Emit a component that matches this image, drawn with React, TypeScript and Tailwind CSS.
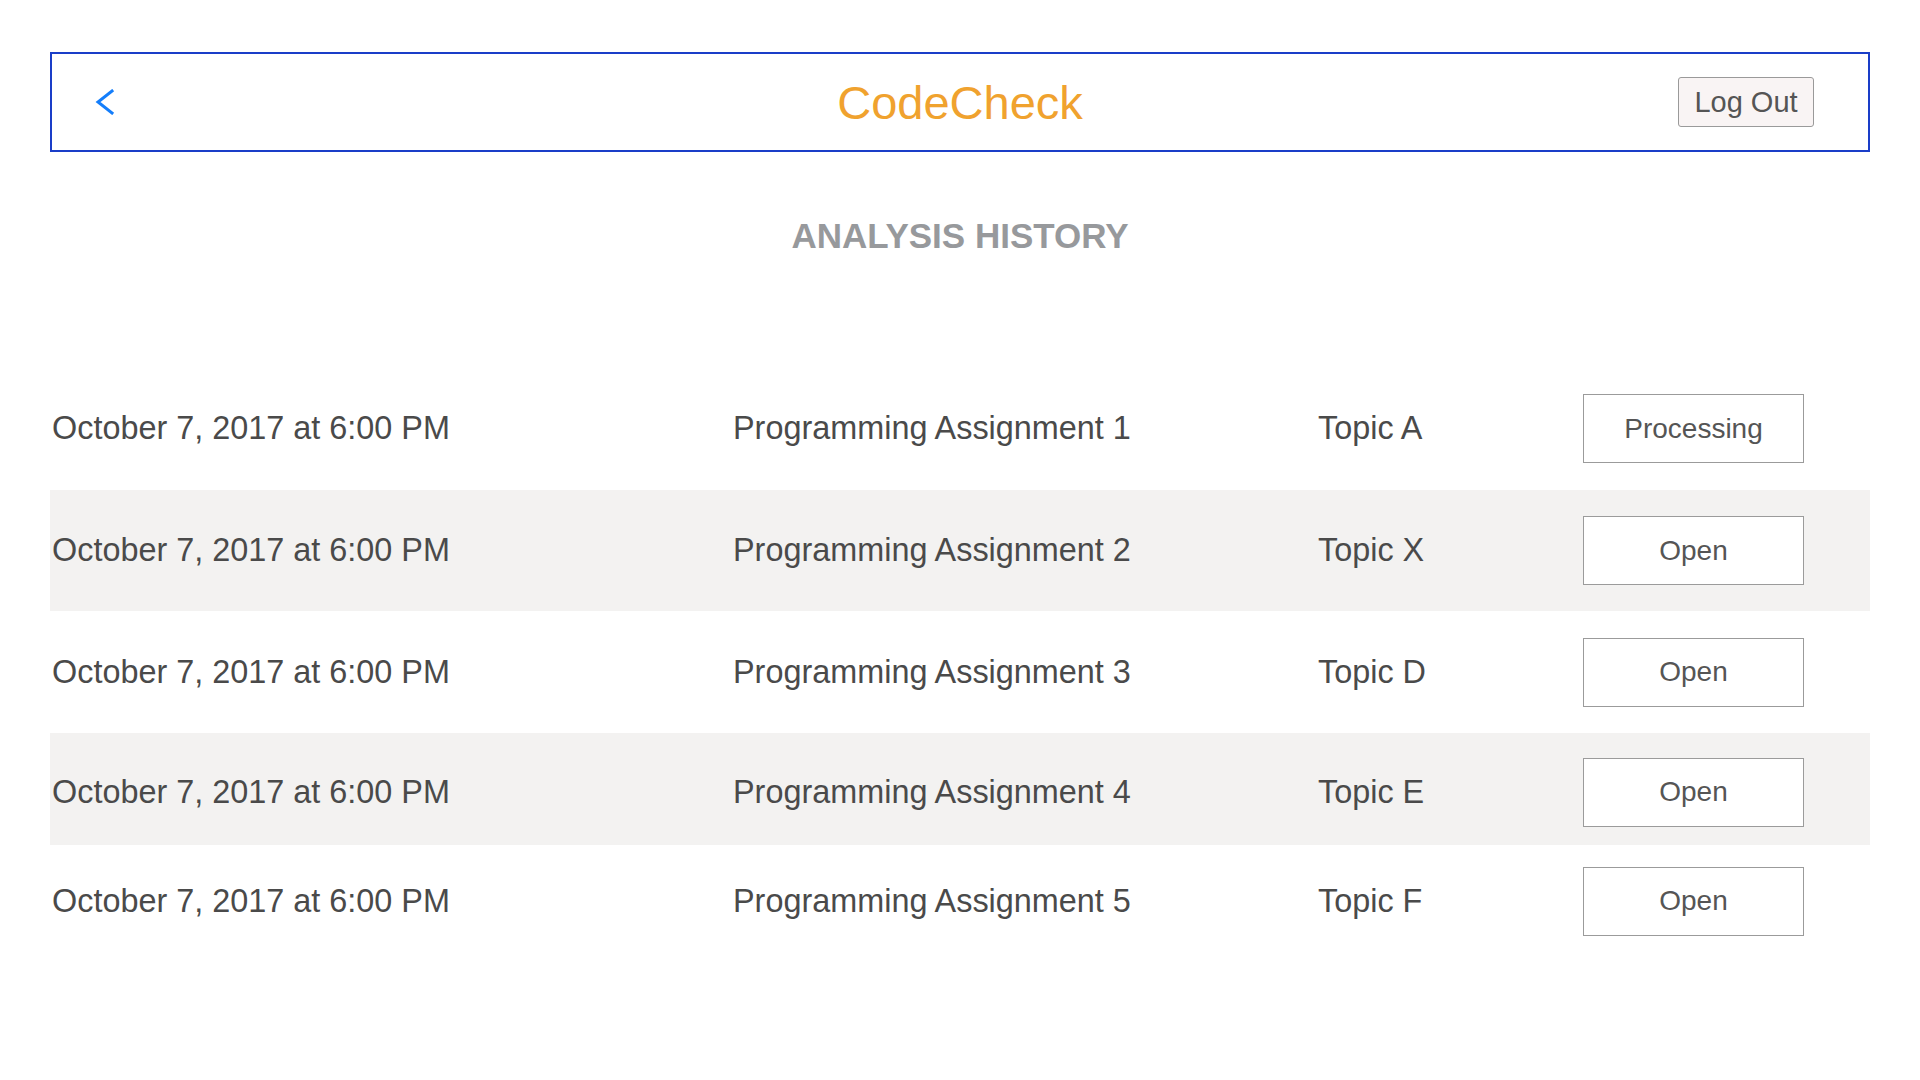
import React from 'react';

const rows = [
  { date: 'October 7, 2017 at 6:00 PM', name: 'Programming Assignment 1', topic: 'Topic A', status: 'Processing', h: 'h-[123px]', band: false },
  { date: 'October 7, 2017 at 6:00 PM', name: 'Programming Assignment 2', topic: 'Topic X', status: 'Open', h: 'h-[121px]', band: true },
  { date: 'October 7, 2017 at 6:00 PM', name: 'Programming Assignment 3', topic: 'Topic D', status: 'Open', h: 'h-[122px]', band: false },
  { date: 'October 7, 2017 at 6:00 PM', name: 'Programming Assignment 4', topic: 'Topic E', status: 'Open', h: 'h-[112px] pt-[6px]', band: true },
  { date: 'October 7, 2017 at 6:00 PM', name: 'Programming Assignment 5', topic: 'Topic F', status: 'Open', h: 'h-[112px]', band: false },
];

export default function App() {
  return (
    <div className="min-h-screen w-full bg-white pt-[52px] font-['Liberation_Sans',Arial,sans-serif]">
      {/* Top bar */}
      <header className="mx-[50px] h-[100px] border-2 border-[#1a3ec8] grid grid-cols-[1fr_auto_1fr] items-center">
        <div className="pl-[43px] flex items-center">
          <button className="flex items-center" aria-label="Back">
            <svg width="20" height="26" viewBox="0 0 20 26" fill="none">
              <polyline points="17,2 3,13 17,24" stroke="#147efb" strokeWidth="3" strokeLinecap="square" strokeLinejoin="miter" />
            </svg>
          </button>
        </div>
        <h1 className="text-[47px] leading-none text-[#f0a22e]">CodeCheck</h1>
        <div className="flex justify-end pr-[54px]">
          <button className="h-[50px] w-[136px] rounded-[3px] border border-[#9a9a9a] bg-[#f9f4f4] text-[29px] text-[#555555] leading-none">
            Log Out
          </button>
        </div>
      </header>

      <h2 className="mt-[66px] text-center text-[35px] leading-[35px] font-bold text-[#97999c]">ANALYSIS HISTORY</h2>

      {/* History list */}
      <div className="mx-[50px] mt-[114px]">
        {rows.map((r) => (
          <div
            key={r.name}
            className={`${r.h} ${r.band ? 'bg-[#f3f2f1]' : 'bg-white'} grid grid-cols-[681px_585px_265px_221px] items-center pl-[2px] text-[32.4px] text-[#4a4a4a]`}
          >
            <span>{r.date}</span>
            <span>{r.name}</span>
            <span>{r.topic}</span>
            <button className="h-[69px] w-[221px] border border-[#9b9b9b] bg-white text-[28px] text-[#555555]">
              {r.status}
            </button>
          </div>
        ))}
      </div>
    </div>
  );
}
